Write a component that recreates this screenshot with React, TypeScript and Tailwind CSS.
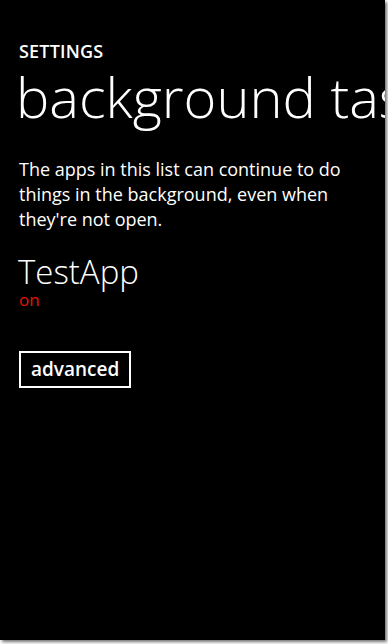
export default function App() {
  return (
    <div className="w-[388px] h-[644px] bg-white">
      <div
        className="w-[385px] h-[640px] bg-black overflow-hidden shadow-[2px_2px_3px_rgba(0,0,0,0.55)] text-white"
        style={{ fontFamily: '"Open Sans", "Noto Sans", sans-serif' }}
      >
        <div className="pl-[19px] pt-[40px]">
          <div className="text-[18px] leading-[22px] font-semibold tracking-[0.2px]">SETTINGS</div>
          <div className="mt-[3px] text-[56px] leading-[62px] font-light whitespace-nowrap -ml-[3px]">
            background tasks
          </div>
          <p className="mt-[30px] pr-[40px] text-[18px] leading-[25px]">
            The apps in this list can continue to do things in the background, even when they're not open.
          </p>
          <div className="mt-[23px] text-[33px] leading-[34px] font-light -ml-[1px]">TestApp</div>
          <div className="mt-[2px] text-[17px] leading-[18px] text-[#e51400]">on</div>
          <button className="mt-[42px] h-[37px] px-[10px] border-2 border-white text-[19px] leading-none font-semibold">
            advanced
          </button>
        </div>
      </div>
    </div>
  );
}
